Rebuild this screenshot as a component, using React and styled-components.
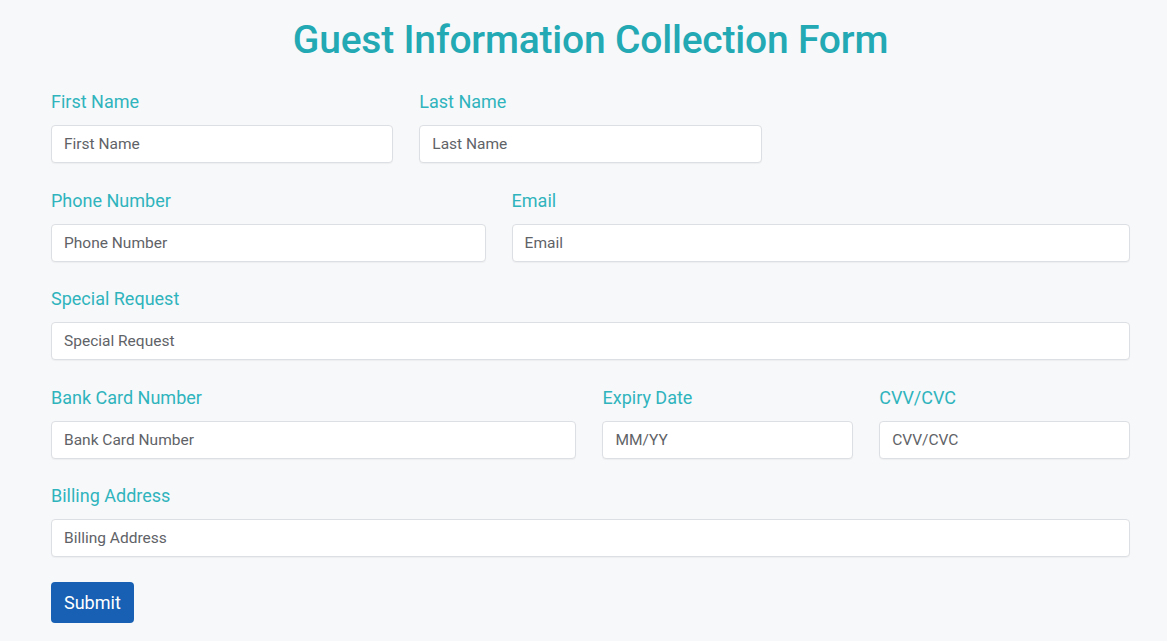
import React from "react";
import styled, { createGlobalStyle } from "styled-components";

const Global = createGlobalStyle`
  html, body { margin: 0; padding: 0; background: #f7f8fa; }
  body { font-family: Roboto, "Liberation Sans", Arial, sans-serif; }
`;

const Page = styled.div`
  min-height: 641px;
  box-sizing: border-box;
  padding: 17px 37px 0 51px;
`;

const Title = styled.h1`
  margin: 0 0 27px;
  text-align: center;
  font-size: 39px;
  line-height: 46px;
  font-weight: 500;
  color: #22a9b3;
  letter-spacing: -0.2px;
`;

const Form = styled.form`
  display: flex;
  flex-direction: column;
  gap: 25.5px;
`;

const Row = styled.div`
  display: grid;
  grid-template-columns: ${(p) => p.$cols};
  column-gap: 26px;
`;

const Field = styled.div`
  display: flex;
  flex-direction: column;
`;

const Label = styled.label`
  font-size: 18px;
  line-height: 24px;
  color: #2fb4bd;
  margin-bottom: 11px;
`;

const Input = styled.input`
  box-sizing: border-box;
  height: 38px;
  width: 100%;
  padding: 0 12px;
  border: 1px solid #dcdfe3;
  border-radius: 4px;
  background: #fff;
  font-family: inherit;
  font-size: 15.5px;
  color: #333;
  box-shadow: 0 1px 1px rgba(0, 0, 0, 0.04);
  &::placeholder { color: #5f6368; }
`;

const Button = styled.button`
  align-self: flex-start;
  margin-top: -0.5px;
  height: 41px;
  padding: 0 13px;
  border: none;
  border-radius: 4px;
  background: #1760b4;
  color: #fff;
  font-family: inherit;
  font-size: 18px;
`;

const F = ({ label, ph }) => (
  <Field>
    <Label>{label}</Label>
    <Input placeholder={ph ?? label} />
  </Field>
);

export default function App() {
  return (
    <>
      <Global />
      <Page>
        <Title>Guest Information Collection Form</Title>
        <Form onSubmit={(e) => e.preventDefault()}>
          <Row $cols="1fr 1fr 1fr">
            <F label="First Name" />
            <F label="Last Name" />
          </Row>
          <Row $cols="435fr 619fr">
            <F label="Phone Number" />
            <F label="Email" />
          </Row>
          <Row $cols="1fr">
            <F label="Special Request" />
          </Row>
          <Row $cols="526fr 251fr 251fr">
            <F label="Bank Card Number" />
            <F label="Expiry Date" ph="MM/YY" />
            <F label="CVV/CVC" />
          </Row>
          <Row $cols="1fr">
            <F label="Billing Address" />
          </Row>
          <Button type="submit">Submit</Button>
        </Form>
      </Page>
    </>
  );
}
